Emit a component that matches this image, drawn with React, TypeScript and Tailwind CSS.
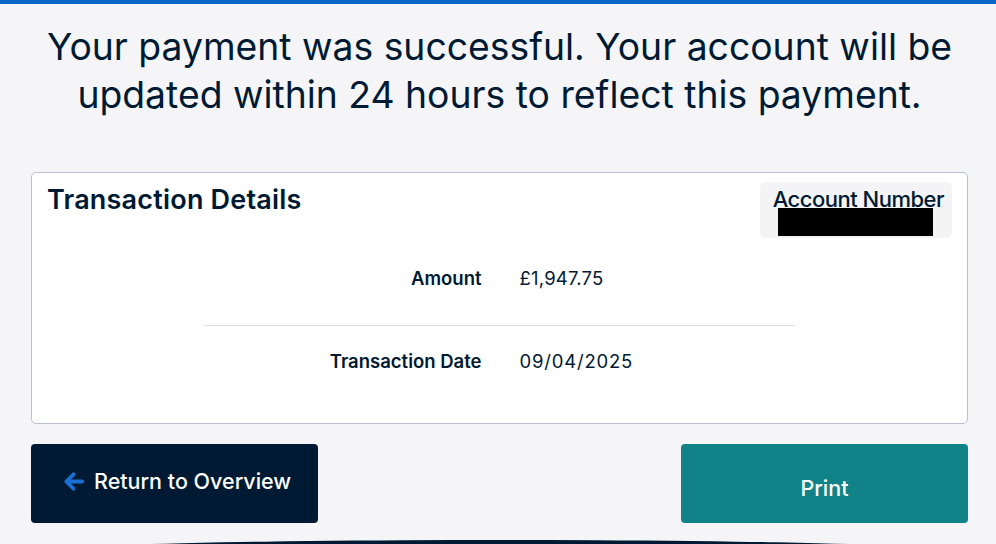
function ArrowLeft() {
  return (
    <svg viewBox="0 0 24 24" className="w-[23px] h-[23px]" fill="none" stroke="#1a6fd6" strokeWidth={4} strokeLinecap="round" strokeLinejoin="round">
      <path d="M21 12H5" />
      <path d="M12 4.5 4.5 12l7.5 7.5" />
    </svg>
  );
}

export default function App() {
  return (
    <div className="bg-[#f5f5f8] text-[#011a33] font-['Inter',sans-serif] overflow-hidden h-[544px]">
      <div className="h-[4px] bg-[#0766c8]" />
      <div className="pl-[31px] pr-[28px]">
        <h1 className="pt-[19px] mx-auto max-w-[930px] text-center text-[37.3px] leading-[48px] font-normal">
          Your payment was successful. Your account will be updated within 24 hours to reflect this payment.
        </h1>

        {/* Transaction card */}
        <div className="mt-[53px] bg-white border border-[#b9c1d1] rounded-[5px] h-[252px]">
          <div className="flex justify-between items-start pt-[9px] pl-[15px] pr-[15px]">
            <h2 className="text-[27px] leading-[36px] font-semibold tracking-[0.2px]">Transaction Details</h2>
            <div className="bg-[#f4f4f6] rounded-[5px] w-[192px] h-[56px] pt-[5px] pr-[8px] flex flex-col items-end">
              <span className="text-[22px] leading-[24px] font-medium tracking-[-0.5px]">Account Number</span>
              <div className="w-[155px] h-[28px] bg-black mr-[11px] -mt-[3px]" />
            </div>
          </div>
          <div className="w-[591px] mx-auto">
            <div className="grid grid-cols-2 pt-[28px] pb-[35px] border-b border-[#e2e2e6] text-[18.5px] leading-[24px]">
              <span className="text-right pr-[18px] font-semibold">Amount</span>
              <span className="pl-[20px] tracking-[0.2px]">£1,947.75</span>
            </div>
            <div className="grid grid-cols-2 pt-[23px] text-[18.5px] leading-[24px]">
              <span className="text-right pr-[18px] font-semibold">Transaction Date</span>
              <span className="pl-[20px] tracking-[0.8px]">09/04/2025</span>
            </div>
          </div>
        </div>

        {/* Actions */}
        <div className="mt-[20px] flex justify-between">
          <button className="w-[287px] h-[79px] rounded-[4px] bg-[#011a33] text-white flex items-center pl-[31px] pb-[4px] gap-[9px] text-[21.5px] font-medium">
            <ArrowLeft />
            <span>Return to Overview</span>
          </button>
          <button className="w-[287px] h-[79px] rounded-[4px] bg-[#118287] text-white text-[21.5px] font-medium pt-[9px]">
            Print
          </button>
        </div>
      </div>
      <div className="mt-[17px] mx-auto w-[1000px] h-[40px] bg-[#011a33] rounded-t-[50%_14px]" />
    </div>
  );
}
